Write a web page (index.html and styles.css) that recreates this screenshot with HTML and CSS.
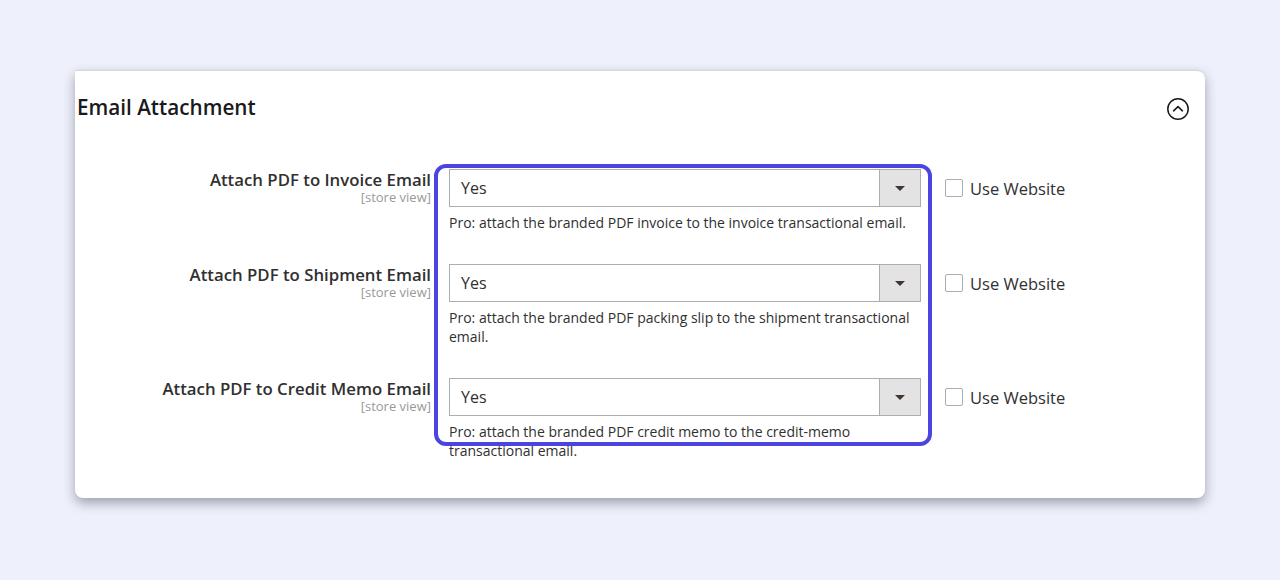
FILE: index.html
```html
<!DOCTYPE html>
<html lang="en">
<head>
    <meta charset="UTF-8">
    <meta name="viewport" content="width=device-width, initial-scale=1.0">
    <title>Email Attachment</title>
    <link rel="stylesheet" href="styles.css">
</head>
<body>
    <div class="section">
        <div class="section-header">
            <h2>Email Attachment</h2>
            <svg class="collapse-icon" width="24" height="24" viewBox="0 0 24 24">
                <circle cx="12" cy="12" r="10.2" fill="none" stroke="#1a1a1a" stroke-width="1.5"/>
                <path d="M7.6 13.8 L12 9.6 L16.4 13.8" fill="none" stroke="#1a1a1a" stroke-width="1.6" stroke-linecap="round" stroke-linejoin="round"/>
            </svg>
        </div>

        <div class="fields">
            <div class="field-row">
                <div class="field-label">
                    <span class="label-text">Attach PDF to Invoice Email</span>
                    <span class="scope">[store view]</span>
                </div>
                <div class="field-control">
                    <div class="select">
                        <span class="select-value">Yes</span>
                        <span class="select-arrow"></span>
                    </div>
                    <p class="note">Pro: attach the branded PDF invoice to the invoice transactional email.</p>
                </div>
                <label class="use-default">
                    <span class="checkbox"></span>
                    Use Website
                </label>
            </div>

            <div class="field-row">
                <div class="field-label">
                    <span class="label-text">Attach PDF to Shipment Email</span>
                    <span class="scope">[store view]</span>
                </div>
                <div class="field-control">
                    <div class="select">
                        <span class="select-value">Yes</span>
                        <span class="select-arrow"></span>
                    </div>
                    <p class="note">Pro: attach the branded PDF packing slip to the shipment transactional email.</p>
                </div>
                <label class="use-default">
                    <span class="checkbox"></span>
                    Use Website
                </label>
            </div>

            <div class="field-row">
                <div class="field-label">
                    <span class="label-text">Attach PDF to Credit Memo Email</span>
                    <span class="scope">[store view]</span>
                </div>
                <div class="field-control">
                    <div class="select">
                        <span class="select-value">Yes</span>
                        <span class="select-arrow"></span>
                    </div>
                    <p class="note">Pro: attach the branded PDF credit memo to the credit-memo transactional email.</p>
                </div>
                <label class="use-default">
                    <span class="checkbox"></span>
                    Use Website
                </label>
            </div>
        </div>

        <div class="highlight"></div>
    </div>
</body>
</html>
```

FILE: styles.css
```css
body {
    font-family: "Open Sans", "Noto Sans", sans-serif;
    background-color: #eef0fb;
    margin: 0;
    padding: 70px 75px;
    color: #303030;
}
.section {
    position: relative;
    width: 1130px;
    height: 428px;
    box-sizing: border-box;
    background-color: #ffffff;
    border-top: 1px solid #d6d6d6;
    border-radius: 0 8px 8px 8px;
    box-shadow: 0 5px 12px rgba(40, 40, 60, 0.4);
}
.section-header {
    display: flex;
    justify-content: space-between;
    align-items: flex-start;
    height: 26px;
    padding: 23px 15px 0 2px;
}
.section-header h2 {
    margin: 0;
    font-size: 20.7px;
    line-height: 26px;
    font-weight: 600;
    color: #1a1a1a;
}
.collapse-icon {
    display: block;
    margin-top: 3px;
}
.fields {
    margin-top: 49px;
}
.field-row {
    display: flex;
    align-items: flex-start;
    margin-bottom: 32px;
}
.field-label {
    width: 356px;
    text-align: right;
    padding-top: 1px;
}
.label-text {
    display: block;
    font-size: 16.8px;
    line-height: 19px;
    font-weight: 600;
    color: #303030;
}
.scope {
    display: block;
    margin-top: 1px;
    font-size: 13px;
    line-height: 15px;
    color: #999999;
}
.field-control {
    width: 472px;
    margin-left: 18px;
}
.select {
    display: flex;
    height: 38px;
    box-sizing: border-box;
    border: 1px solid #adadad;
    background-color: #ffffff;
}
.select-value {
    flex: 1;
    padding-left: 11px;
    font-size: 16px;
    line-height: 36px;
    color: #303030;
}
.select-arrow {
    width: 40px;
    border-left: 1px solid #adadad;
    background-color: #e3e3e3;
    position: relative;
}
.select-arrow::after {
    content: "";
    position: absolute;
    left: 15px;
    top: 16px;
    border-left: 5px solid transparent;
    border-right: 5px solid transparent;
    border-top: 5px solid #41362f;
}
.note {
    margin: 6px 0 0;
    font-size: 14px;
    line-height: 19px;
    color: #303030;
}
.use-default {
    display: flex;
    align-items: center;
    gap: 7px;
    margin-left: 24px;
    height: 38px;
    font-size: 16.5px;
    color: #303030;
}
.checkbox {
    width: 18px;
    height: 18px;
    box-sizing: border-box;
    border: 1px solid #adadad;
    border-radius: 2px;
    background-color: #ffffff;
}
.highlight {
    position: absolute;
    left: 359px;
    top: 93px;
    width: 498px;
    height: 282px;
    box-sizing: border-box;
    border: 4px solid #4b44e0;
    border-radius: 12px;
    pointer-events: none;
}
```
